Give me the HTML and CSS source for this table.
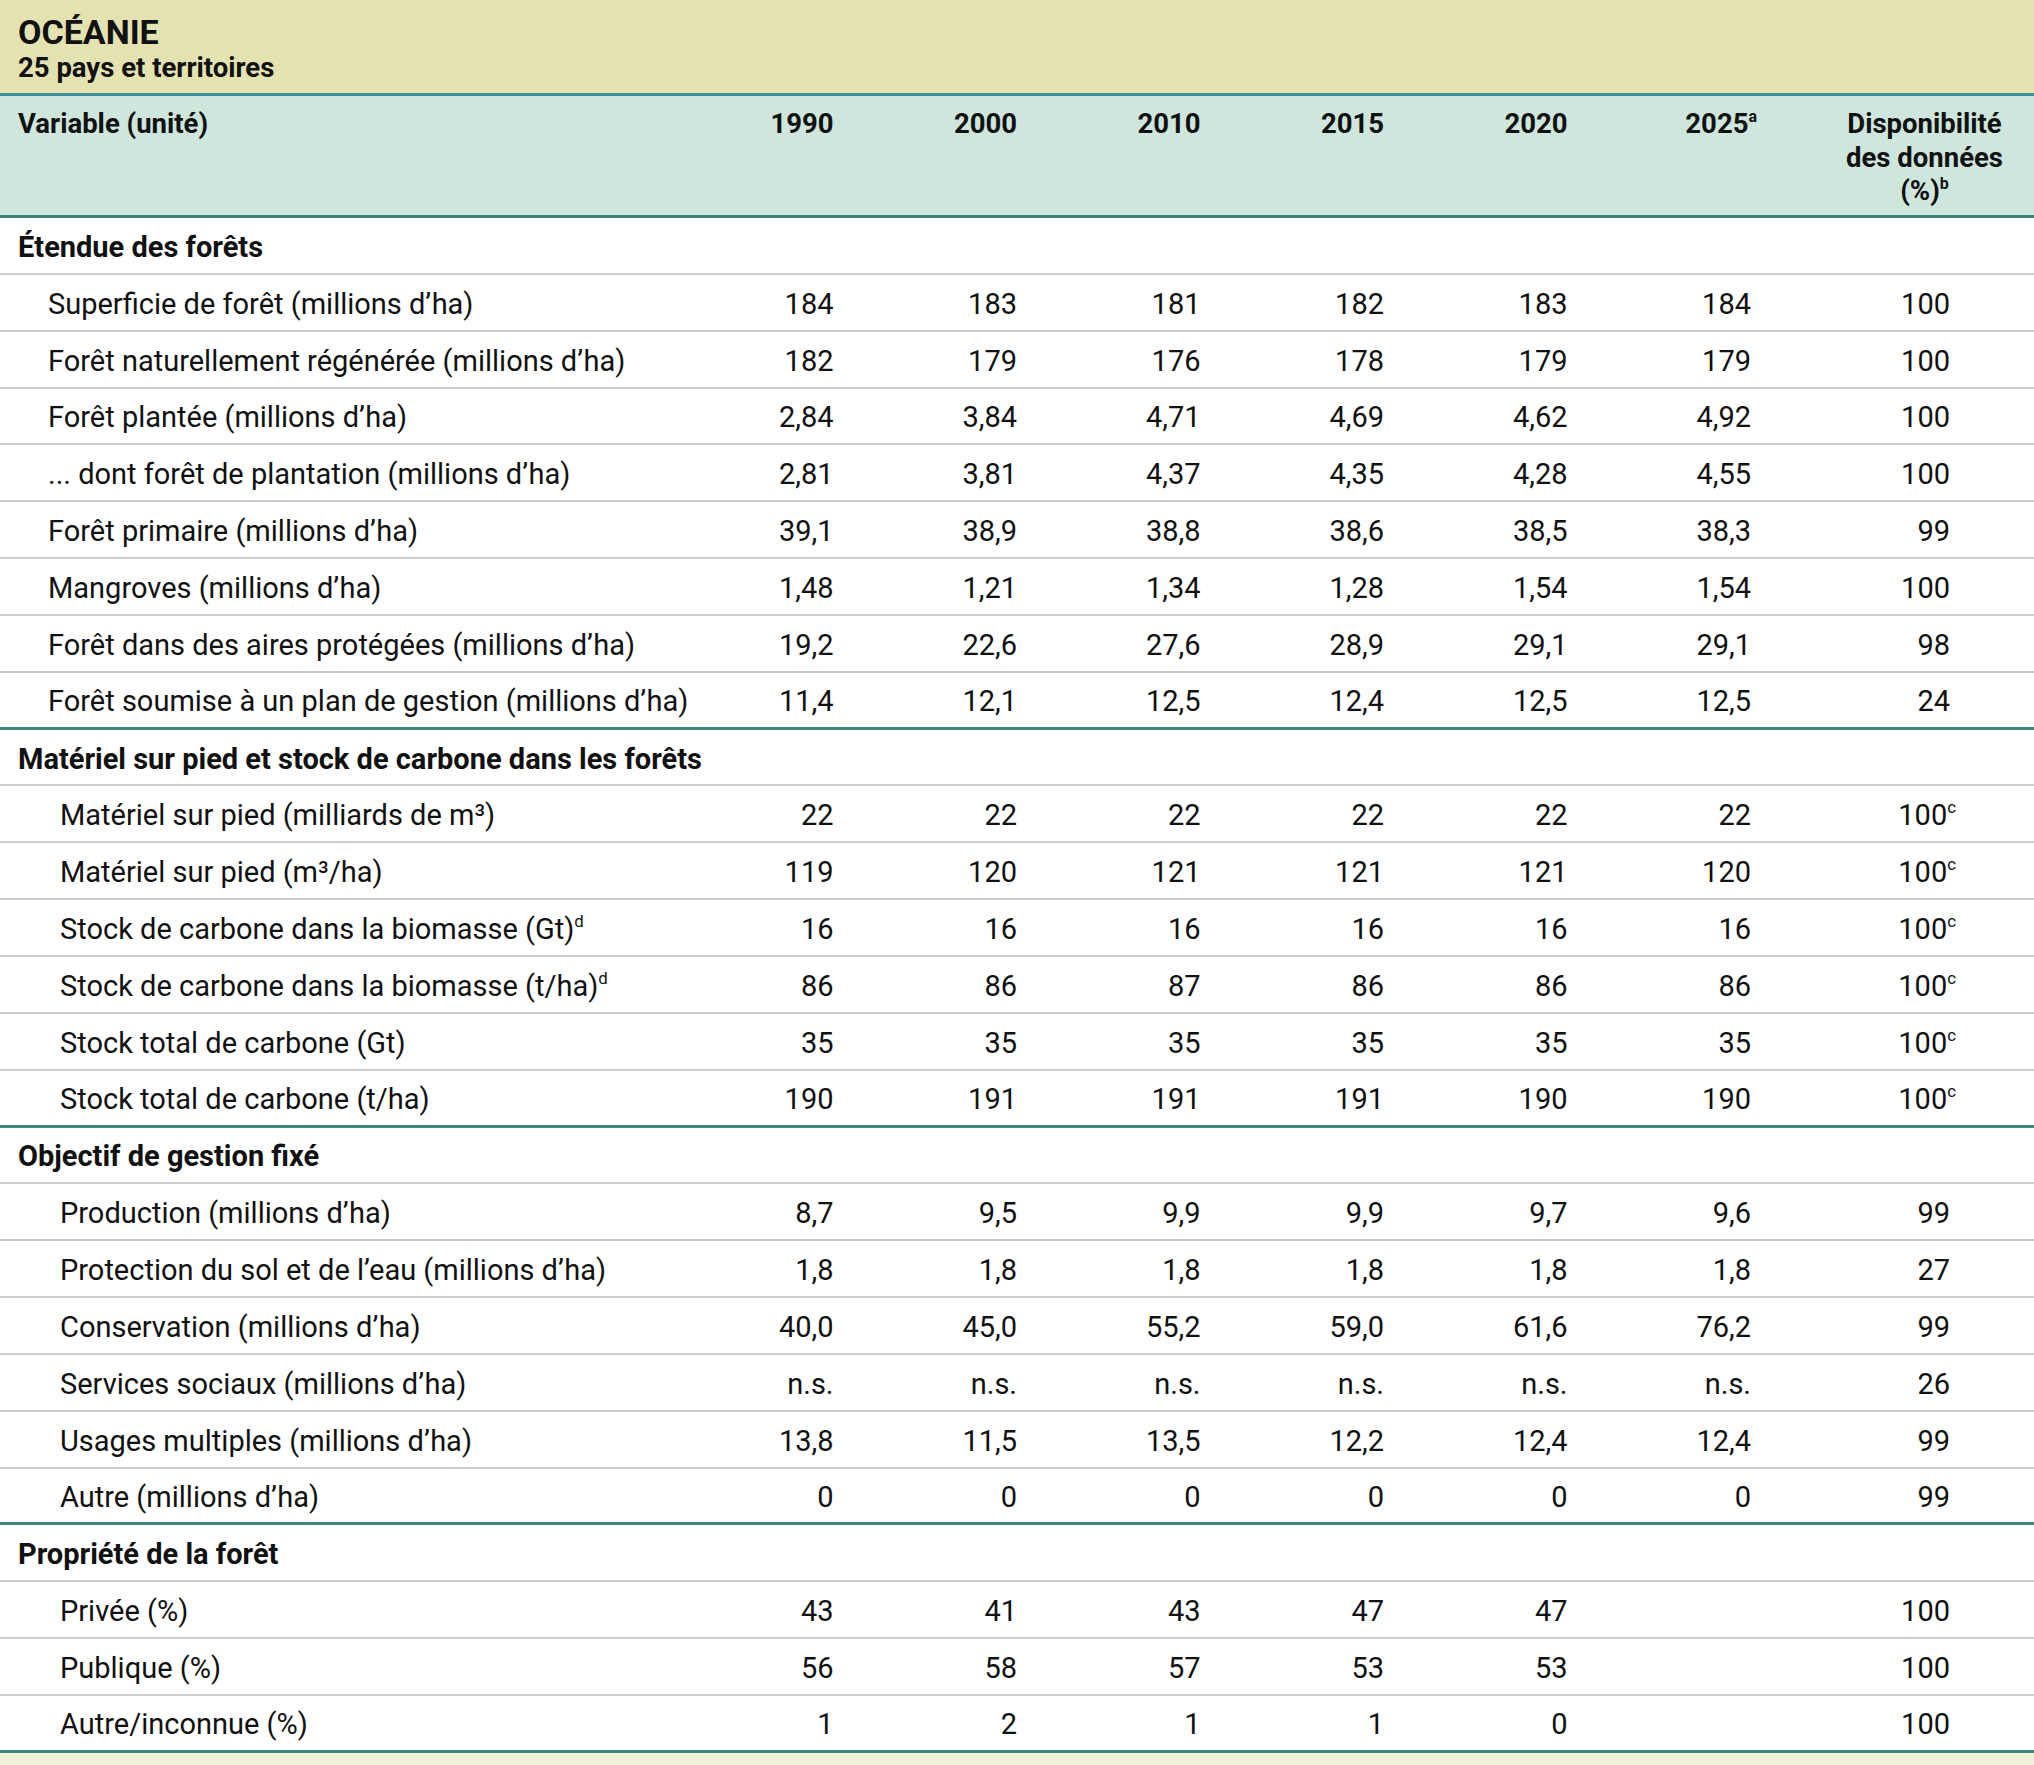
FILE: index.html
```html
<!DOCTYPE html>
<html lang="fr">
<head>
<meta charset="utf-8">
<title>Océanie</title>
<link rel="stylesheet" href="styles.css">
</head>
<body>
<div class="sheet">
  <header class="title-band">
    <div class="title">OCÉANIE</div>
    <div class="subtitle">25 pays et territoires</div>
  </header>

  <div class="row head">
    <div class="lab">Variable (unité)</div>
    <div class="num">1990</div>
    <div class="num">2000</div>
    <div class="num">2010</div>
    <div class="num">2015</div>
    <div class="num">2020</div>
    <div class="num">2025<sup class="note">a</sup></div>
    <div class="avail"><span class="avail-box">Disponibilité<br>des données<br>(%)<sup class="note">b</sup></span></div>
  </div>

  <div class="row section"><div class="lab">Étendue des forêts</div></div>
  <div class="row item s1"><div class="lab">Superficie de forêt (millions d’ha)</div><div class="num">184</div><div class="num">183</div><div class="num">181</div><div class="num">182</div><div class="num">183</div><div class="num">184</div><div class="pct">100</div></div>
  <div class="row item s1"><div class="lab">Forêt naturellement régénérée (millions d’ha)</div><div class="num">182</div><div class="num">179</div><div class="num">176</div><div class="num">178</div><div class="num">179</div><div class="num">179</div><div class="pct">100</div></div>
  <div class="row item s1"><div class="lab">Forêt plantée (millions d’ha)</div><div class="num">2,84</div><div class="num">3,84</div><div class="num">4,71</div><div class="num">4,69</div><div class="num">4,62</div><div class="num">4,92</div><div class="pct">100</div></div>
  <div class="row item s1"><div class="lab">... dont forêt de plantation (millions d’ha)</div><div class="num">2,81</div><div class="num">3,81</div><div class="num">4,37</div><div class="num">4,35</div><div class="num">4,28</div><div class="num">4,55</div><div class="pct">100</div></div>
  <div class="row item s1"><div class="lab">Forêt primaire (millions d’ha)</div><div class="num">39,1</div><div class="num">38,9</div><div class="num">38,8</div><div class="num">38,6</div><div class="num">38,5</div><div class="num">38,3</div><div class="pct">99</div></div>
  <div class="row item s1"><div class="lab">Mangroves (millions d’ha)</div><div class="num">1,48</div><div class="num">1,21</div><div class="num">1,34</div><div class="num">1,28</div><div class="num">1,54</div><div class="num">1,54</div><div class="pct">100</div></div>
  <div class="row item s1"><div class="lab">Forêt dans des aires protégées (millions d’ha)</div><div class="num">19,2</div><div class="num">22,6</div><div class="num">27,6</div><div class="num">28,9</div><div class="num">29,1</div><div class="num">29,1</div><div class="pct">98</div></div>
  <div class="row item s1 last"><div class="lab">Forêt soumise à un plan de gestion (millions d’ha)</div><div class="num">11,4</div><div class="num">12,1</div><div class="num">12,5</div><div class="num">12,4</div><div class="num">12,5</div><div class="num">12,5</div><div class="pct">24</div></div>

  <div class="row section"><div class="lab">Matériel sur pied et stock de carbone dans les forêts</div></div>
  <div class="row item"><div class="lab">Matériel sur pied (milliards de m³)</div><div class="num">22</div><div class="num">22</div><div class="num">22</div><div class="num">22</div><div class="num">22</div><div class="num">22</div><div class="pct">100<sup class="note">c</sup></div></div>
  <div class="row item"><div class="lab">Matériel sur pied (m³/ha)</div><div class="num">119</div><div class="num">120</div><div class="num">121</div><div class="num">121</div><div class="num">121</div><div class="num">120</div><div class="pct">100<sup class="note">c</sup></div></div>
  <div class="row item"><div class="lab">Stock de carbone dans la biomasse (Gt)<sup class="note">d</sup></div><div class="num">16</div><div class="num">16</div><div class="num">16</div><div class="num">16</div><div class="num">16</div><div class="num">16</div><div class="pct">100<sup class="note">c</sup></div></div>
  <div class="row item"><div class="lab">Stock de carbone dans la biomasse (t/ha)<sup class="note">d</sup></div><div class="num">86</div><div class="num">86</div><div class="num">87</div><div class="num">86</div><div class="num">86</div><div class="num">86</div><div class="pct">100<sup class="note">c</sup></div></div>
  <div class="row item"><div class="lab">Stock total de carbone (Gt)</div><div class="num">35</div><div class="num">35</div><div class="num">35</div><div class="num">35</div><div class="num">35</div><div class="num">35</div><div class="pct">100<sup class="note">c</sup></div></div>
  <div class="row item last"><div class="lab">Stock total de carbone (t/ha)</div><div class="num">190</div><div class="num">191</div><div class="num">191</div><div class="num">191</div><div class="num">190</div><div class="num">190</div><div class="pct">100<sup class="note">c</sup></div></div>

  <div class="row section"><div class="lab">Objectif de gestion fixé</div></div>
  <div class="row item"><div class="lab">Production (millions d’ha)</div><div class="num">8,7</div><div class="num">9,5</div><div class="num">9,9</div><div class="num">9,9</div><div class="num">9,7</div><div class="num">9,6</div><div class="pct">99</div></div>
  <div class="row item"><div class="lab">Protection du sol et de l’eau (millions d’ha)</div><div class="num">1,8</div><div class="num">1,8</div><div class="num">1,8</div><div class="num">1,8</div><div class="num">1,8</div><div class="num">1,8</div><div class="pct">27</div></div>
  <div class="row item"><div class="lab">Conservation (millions d’ha)</div><div class="num">40,0</div><div class="num">45,0</div><div class="num">55,2</div><div class="num">59,0</div><div class="num">61,6</div><div class="num">76,2</div><div class="pct">99</div></div>
  <div class="row item"><div class="lab">Services sociaux (millions d’ha)</div><div class="num">n.s.</div><div class="num">n.s.</div><div class="num">n.s.</div><div class="num">n.s.</div><div class="num">n.s.</div><div class="num">n.s.</div><div class="pct">26</div></div>
  <div class="row item"><div class="lab">Usages multiples (millions d’ha)</div><div class="num">13,8</div><div class="num">11,5</div><div class="num">13,5</div><div class="num">12,2</div><div class="num">12,4</div><div class="num">12,4</div><div class="pct">99</div></div>
  <div class="row item last"><div class="lab">Autre (millions d’ha)</div><div class="num">0</div><div class="num">0</div><div class="num">0</div><div class="num">0</div><div class="num">0</div><div class="num">0</div><div class="pct">99</div></div>

  <div class="row section"><div class="lab">Propriété de la forêt</div></div>
  <div class="row item"><div class="lab">Privée (%)</div><div class="num">43</div><div class="num">41</div><div class="num">43</div><div class="num">47</div><div class="num">47</div><div class="num"></div><div class="pct">100</div></div>
  <div class="row item"><div class="lab">Publique (%)</div><div class="num">56</div><div class="num">58</div><div class="num">57</div><div class="num">53</div><div class="num">53</div><div class="num"></div><div class="pct">100</div></div>
  <div class="row item last"><div class="lab">Autre/inconnue (%)</div><div class="num">1</div><div class="num">2</div><div class="num">1</div><div class="num">1</div><div class="num">0</div><div class="num"></div><div class="pct">100</div></div>

  <div class="foot"></div>
</div>
</body>
</html>
```

FILE: styles.css
```css
html, body {
  margin: 0;
  padding: 0;
  background: #ffffff;
}

body {
  font-family: "Roboto", "Liberation Sans", sans-serif;
  color: #111111;
}

.sheet {
  width: 2034px;
}

.title-band {
  background: #e4e2b1;
  border-bottom: 3px solid #3f8e97;
  padding: 14px 18px 0;
  height: 96px;
  box-sizing: border-box;
}

.title {
  font-weight: 700;
  font-size: 34px;
  line-height: 36px;
}

.subtitle {
  font-weight: 700;
  font-size: 27.5px;
  line-height: 36px;
}

.row {
  display: grid;
  grid-template-columns: 700px 143.5px repeat(5, 183.5px) 1fr;
  height: 56.85px;
  box-sizing: border-box;
  border-bottom: 2px solid #cbcbcb;
  align-items: center;
  padding-top: 3px;
  font-size: 29px;
  line-height: 34px;
}

.row.head {
  height: 122px;
  background: #cee6dc;
  border-bottom: 3px solid #3c8279;
  align-items: start;
  padding-top: 11px;
  font-weight: 700;
  font-size: 27.5px;
  line-height: 33.5px;
}

.row.last {
  border-bottom: 3px solid #3d877f;
}

.row.section .lab {
  font-weight: 700;
}

.lab {
  padding-left: 18px;
  white-space: nowrap;
}

.item .lab {
  padding-left: 60px;
}

.item.s1 .lab {
  padding-left: 48px;
}

.num {
  text-align: right;
  padding-right: 10px;
  white-space: nowrap;
}

.pct {
  text-align: right;
  padding-right: 84px;
  white-space: nowrap;
}

.avail {
  text-align: right;
  padding-right: 31px;
}

.avail-box {
  display: inline-block;
  text-align: center;
}

.note {
  font-size: 0.58em;
  line-height: 0;
  vertical-align: baseline;
  position: relative;
  top: -0.72em;
}

.num .note,
.pct .note {
  margin-right: -6px;
}

.foot {
  height: 13px;
  background: #f1f0d8;
}
```
